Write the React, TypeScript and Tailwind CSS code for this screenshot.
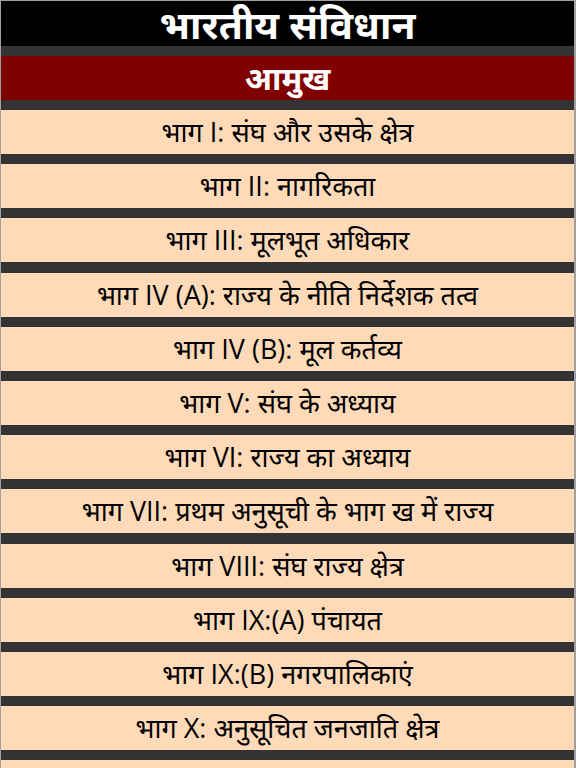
import React from "react";

const items = [
  "भाग I: संघ और उसके क्षेत्र",
  "भाग II: नागरिकता",
  "भाग III: मूलभूत अधिकार",
  "भाग IV (A): राज्य के नीति निर्देशक तत्व",
  "भाग IV (B): मूल कर्तव्य",
  "भाग V: संघ के अध्याय",
  "भाग VI: राज्य का अध्याय",
  "भाग VII: प्रथम अनुसूची के भाग ख में राज्य",
  "भाग VIII: संघ राज्य क्षेत्र",
  "भाग IX:(A) पंचायत",
  "भाग IX:(B) नगरपालिकाएं",
  "भाग X: अनुसूचित जनजाति क्षेत्र",
];

export default function App() {
  return (
    <div
      className="h-[768px] w-[576px] overflow-hidden bg-[#333333] border-t border-l border-r-2 border-[#a0a0a0]"
      style={{ fontFamily: '"Open Sans", "Noto Sans", sans-serif' }}
    >
      <div className="flex h-[45px] items-center justify-center bg-black text-[39px] leading-[45px] font-bold text-white">
        भारतीय संविधान
      </div>
      <div className="h-[10px]" />
      <div className="flex h-[44px] items-center justify-center bg-[#800000] text-[32px] leading-[44px] font-bold text-white">
        आमुख
      </div>
      <div className="flex flex-col gap-[10.2px] pt-[10px]">
        {items.map((t) => (
          <div
            key={t}
            className="flex h-[44px] shrink-0 items-center justify-center whitespace-nowrap bg-[#ffdab9] text-[27px] leading-[44px] text-black"
          >
            {t}
          </div>
        ))}
        <div className="h-[44px] shrink-0 bg-[#ffdab9]" />
      </div>
    </div>
  );
}
